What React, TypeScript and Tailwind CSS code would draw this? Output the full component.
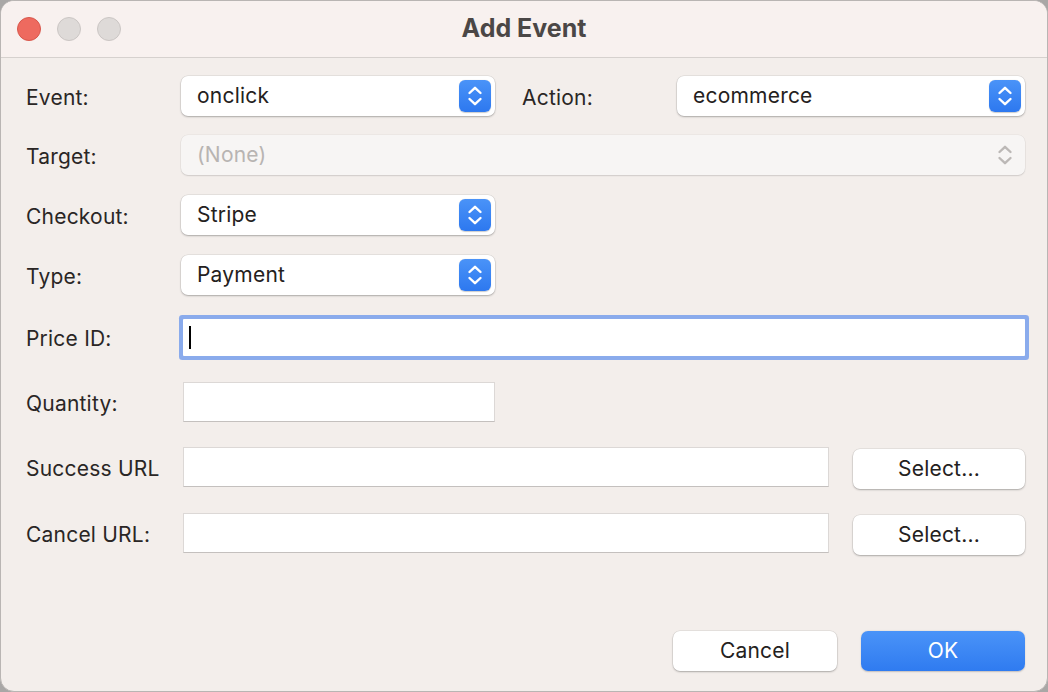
import React from 'react';

const font = { fontFamily: 'Inter, "Open Sans", "Liberation Sans", sans-serif' };

function Stepper({ disabled }: { disabled?: boolean }) {
  return (
    <div
      className={`w-8 h-8 rounded-[6px] flex items-center justify-center ${
        disabled ? '' : 'bg-gradient-to-b from-[#4a93f8] to-[#2d78ef] shadow-[0_0.5px_1px_rgba(0,0,0,0.2)]'
      }`}
    >
      <svg width="18" height="24" viewBox="0 0 18 24" fill="none">
        <path
          d="M3.5 9 L9 3.8 L14.5 9 M3.5 15 L9 20.2 L14.5 15"
          stroke={disabled ? '#bcb8b6' : '#ffffff'}
          strokeWidth="2.4"
          strokeLinecap="round"
          strokeLinejoin="round"
        />
      </svg>
    </div>
  );
}

function Select({ value, width, disabled }: { value: string; width: string; disabled?: boolean }) {
  return (
    <div
      className={`${width} h-10 rounded-[7px] flex items-center justify-between pl-4 pr-1 ${
        disabled
          ? 'bg-[#f7f5f4] shadow-[0_0_0_0.5px_rgba(0,0,0,0.06),0_1px_1.5px_rgba(0,0,0,0.12)]'
          : 'bg-white shadow-[0_0_0_0.5px_rgba(0,0,0,0.1),0_1px_2px_rgba(0,0,0,0.25)]'
      }`}
    >
      <span className={`text-[21px] tracking-[0.01em] ${disabled ? 'text-[#b8b4b2]' : 'text-[#242120]'}`}>{value}</span>
      <Stepper disabled={disabled} />
    </div>
  );
}

function Label({ children }: { children: React.ReactNode }) {
  return <div className="w-[155px] shrink-0 pt-[3px] text-[21px] tracking-[0.01em] text-[#2a2625]">{children}</div>;
}

function TextInput({ width }: { width: string }) {
  return (
    <div className={`${width} h-10 bg-white border border-[#dcd8d6] border-b-[#c4c0be]`} />
  );
}

function PushButton({ children, primary, width }: { children: React.ReactNode; primary?: boolean; width: string }) {
  return (
    <button
      className={`${width} h-10 rounded-[7px] text-[21px] tracking-[0.01em] ${
        primary
          ? 'bg-gradient-to-b from-[#4a93f8] to-[#2f7bf0] text-white shadow-[0_0.5px_1.5px_rgba(0,0,0,0.2)]'
          : 'bg-white text-[#242120] shadow-[0_0_0_0.5px_rgba(0,0,0,0.1),0_1px_2px_rgba(0,0,0,0.25)]'
      }`}
    >
      {children}
    </button>
  );
}

export default function App() {
  return (
    <div className="w-[1048px] h-[692px] bg-[#a9a7a6]" style={font}>
      <div className="w-full h-full rounded-[14px] border border-[#b9b5b3] bg-[#f3eeeb] overflow-hidden flex flex-col">
        {/* title bar */}
        <div className="h-[57px] shrink-0 bg-[#f8f1ef] border-b border-[#d6d1ce] flex items-center relative">
          <div className="flex items-center gap-[16px] pl-[16px]">
            <div className="w-6 h-6 rounded-full bg-[#ee6a5f] border border-[#d8574c]" />
            <div className="w-6 h-6 rounded-full bg-[#dedad8] border border-[#cbc6c4]" />
            <div className="w-6 h-6 rounded-full bg-[#dedad8] border border-[#cbc6c4]" />
          </div>
          <div className="absolute inset-0 flex items-center justify-center text-[25px] font-bold text-[#4b4746] pointer-events-none">
            Add Event
          </div>
        </div>

        {/* form */}
        <div className="flex flex-col pl-[25px] pr-[22px] pt-[18px]">
          <div className="flex items-center">
            <Label>Event:</Label>
            <Select value="onclick" width="w-[314px]" />
            <div className="w-[182px] pl-[27px] pt-[3px] text-[21px] tracking-[0.01em] text-[#2a2625]">Action:</div>
            <Select value="ecommerce" width="w-[348px]" />
          </div>

          <div className="flex items-center mt-[19px]">
            <Label>Target:</Label>
            <Select value="(None)" width="w-[844px]" disabled />
          </div>

          <div className="flex items-center mt-5">
            <Label>Checkout:</Label>
            <Select value="Stripe" width="w-[314px]" />
          </div>

          <div className="flex items-center mt-5">
            <Label>Type:</Label>
            <Select value="Payment" width="w-[314px]" />
          </div>

          <div className="flex items-center mt-[24px] h-[37px]">
            <Label>Price ID:</Label>
            <div className="ml-[2px] w-[842px] h-[37px] bg-white rounded-[1px] ring-4 ring-[#8aabec] flex items-center pl-[6px]">
              <div className="w-[2px] h-[23px] bg-black" />
            </div>
          </div>

          <div className="flex items-center mt-[26px]">
            <Label>Quantity:</Label>
            <div className="ml-[2px]">
              <TextInput width="w-[312px]" />
            </div>
          </div>

          <div className="flex items-center mt-[23px]">
            <Label>Success URL</Label>
            <div className="ml-[2px]">
              <TextInput width="w-[646px]" />
            </div>
            <div className="ml-[24px] mt-[4px]">
              <PushButton width="w-[172px]">Select...</PushButton>
            </div>
          </div>

          <div className="flex items-center mt-[22px]">
            <Label>Cancel URL:</Label>
            <div className="ml-[2px]">
              <TextInput width="w-[646px]" />
            </div>
            <div className="ml-[24px] mt-[4px]">
              <PushButton width="w-[172px]">Select...</PushButton>
            </div>
          </div>
        </div>

        <div className="flex justify-end gap-6 pr-[22px] mt-[76px]">
          <PushButton width="w-[164px]">Cancel</PushButton>
          <PushButton width="w-[164px]" primary>OK</PushButton>
        </div>
      </div>
    </div>
  );
}
